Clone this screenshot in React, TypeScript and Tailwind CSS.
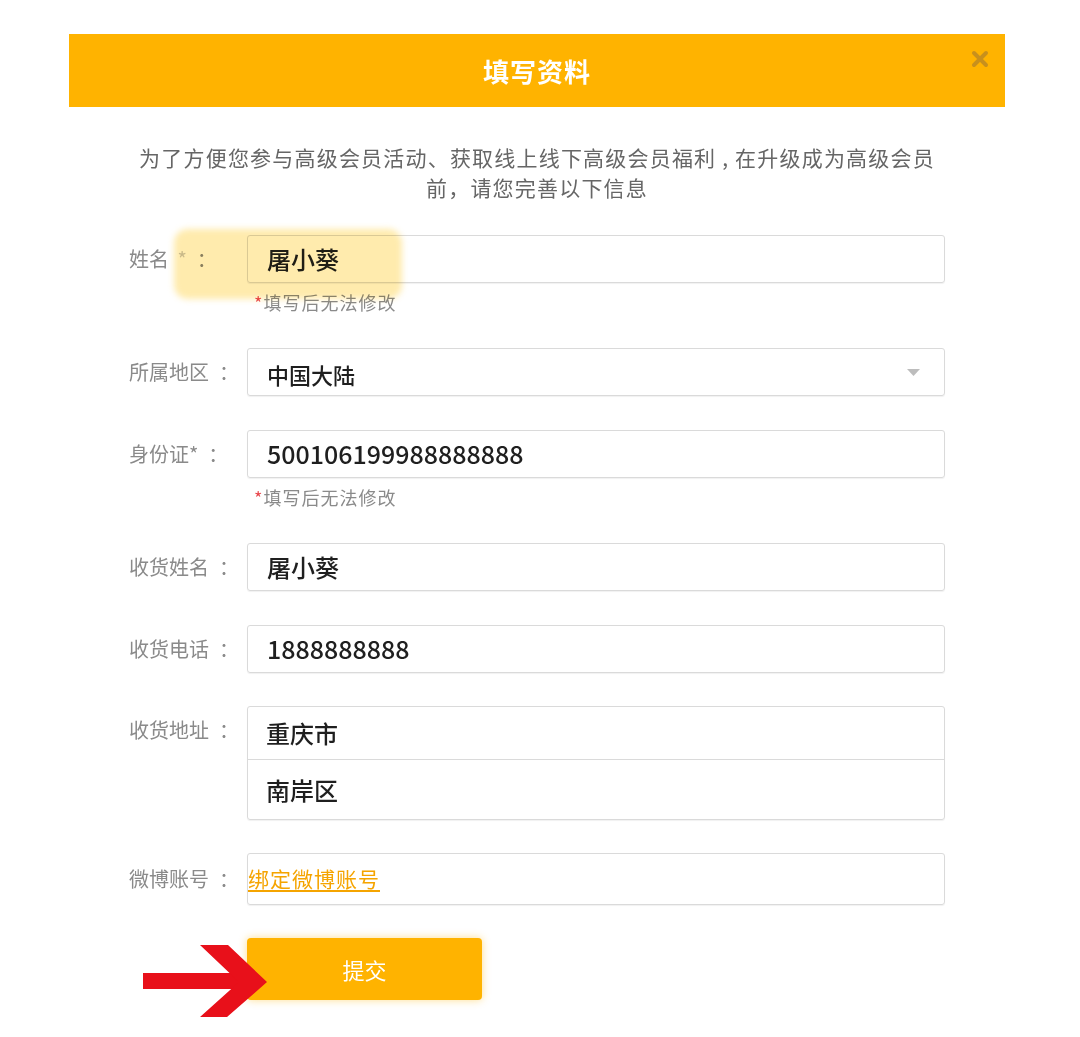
import React from "react";

function Label({ children, lh = "leading-[48px]" }: { children: React.ReactNode; lh?: string }) {
  return (
    <div className={"w-[178px] shrink-0 pl-[60px] h-[48px] text-[20px] text-[#8a8a8a] whitespace-nowrap " + lh}>
      {children}
      <span className="ml-[10px]">：</span>
    </div>
  );
}

function Note() {
  return (
    <div className="mt-[9px] h-[20px] leading-[20px] pl-[7px] text-[18px] tracking-[1px] text-[#8a8a8a]">
      <span className="text-[#e8464b]">*</span>填写后无法修改
    </div>
  );
}

function Field({
  children,
  className = "",
  size = "text-[24px]",
}: {
  children?: React.ReactNode;
  className?: string;
  size?: string;
}) {
  return (
    <div
      className={
        "w-[698px] h-[48px] border border-[#dadada] rounded-[3px] flex items-center pl-[19px] text-[#1f1f1f] font-medium shadow-[0_1px_1px_rgba(0,0,0,0.06)] " +
        size +
        " " +
        className
      }
    >
      {children}
    </div>
  );
}

export default function App() {
  return (
    <div className="relative w-[1080px] min-h-[1037px] bg-white font-['Noto_Sans_CJK_SC',sans-serif]">
      <div className="ml-[69px] pt-[34px] w-[936px]">
        {/* Header */}
        <div className="relative h-[73px] bg-[#FFB300] flex items-center justify-center">
          <span className="text-white text-[26px] font-bold tracking-[1px]">填写资料</span>
          <svg
            className="absolute right-[16px] top-[16px]"
            width="18"
            height="18"
            viewBox="0 0 18 18"
          >
            <path d="M3 3 L15 15 M15 3 L3 15" stroke="#c8901c" strokeWidth="4" strokeLinecap="round" />
          </svg>
        </div>

        {/* Intro */}
        <div className="mt-[35px] text-center text-[21px] leading-[30px] text-[#666] tracking-[1.2px] whitespace-nowrap">
          为了方便您参与高级会员活动、获取线上线下高级会员福利 , 在升级成为高级会员
          <br />
          前，请您完善以下信息
        </div>

        {/* Form */}
        <div className="mt-[33px] flex flex-col">
          {/* 姓名 */}
          <div className="flex">
            <Label>
              姓名 <span className="ml-[4px] text-[#c8c8c8]">*</span>
            </Label>
            <div className="flex flex-col">
              <Field>屠小葵</Field>
              <Note />
            </div>
          </div>

          {/* 所属地区 */}
          <div className="flex mt-[36px]">
            <Label>所属地区</Label>
            <Field size="text-[22px]" className="justify-between pr-[24px]">
              <span className="pt-[5px]">中国大陆</span>
              <svg width="13" height="7" viewBox="0 0 13 7">
                <path d="M0 0 L13 0 L6.5 7 Z" fill="#bdbdbd" />
              </svg>
            </Field>
          </div>

          {/* 身份证 */}
          <div className="flex mt-[34px]">
            <Label>身份证*</Label>
            <div className="flex flex-col">
              <Field size="text-[25px]">500106199988888888</Field>
              <Note />
            </div>
          </div>

          {/* 收货姓名 */}
          <div className="flex mt-[36px]">
            <Label>收货姓名</Label>
            <Field>屠小葵</Field>
          </div>

          {/* 收货电话 */}
          <div className="flex mt-[34px]">
            <Label>收货电话</Label>
            <Field size="text-[25px]">1888888888</Field>
          </div>

          {/* 收货地址 */}
          <div className="flex mt-[33px]">
            <Label>收货地址</Label>
            <div className="w-[698px] border border-[#dadada] rounded-[3px] flex flex-col text-[24px] font-medium text-[#1f1f1f] shadow-[0_1px_1px_rgba(0,0,0,0.06)]">
              <div className="h-[53px] flex items-center pl-[18px] border-b border-[#dadada]">重庆市</div>
              <div className="h-[59px] flex items-center pl-[18px]">南岸区</div>
            </div>
          </div>

          {/* 微博账号 */}
          <div className="flex mt-[33px]">
            <Label lh="leading-[52px]">微博账号</Label>
            <div className="w-[698px] h-[52px] border border-[#dadada] rounded-[3px] flex items-center shadow-[0_1px_1px_rgba(0,0,0,0.06)]">
              <span className="text-[21px] tracking-[1px] text-[#F5A400] underline underline-offset-[3px]">
                绑定微博账号
              </span>
            </div>
          </div>

          {/* Submit */}
          <div className="flex mt-[33px] pb-[37px]">
            <div className="w-[178px] shrink-0" />
            <button className="w-[235px] h-[62px] bg-[#FFB300] rounded-[4px] text-white text-[22px] shadow-[0_0_8px_rgba(255,179,0,0.45)]">
              提交
            </button>
          </div>
        </div>
      </div>

      {/* Highlighter mark */}
      <div className="absolute left-[174px] top-[229px] w-[228px] h-[70px] bg-[#FFD24A]/45 rounded-[14px] blur-[3px] mix-blend-multiply pointer-events-none" />

      {/* Red arrow */}
      <svg
        className="absolute left-[140px] top-[940px] pointer-events-none"
        width="130"
        height="80"
        viewBox="0 0 130 80"
      >
        <rect x="3" y="33" width="96" height="16" fill="#E8101A" />
        <polygon points="60,5 88,5 127,42 87,77 60,77 99,42" fill="#E8101A" />
      </svg>
    </div>
  );
}
